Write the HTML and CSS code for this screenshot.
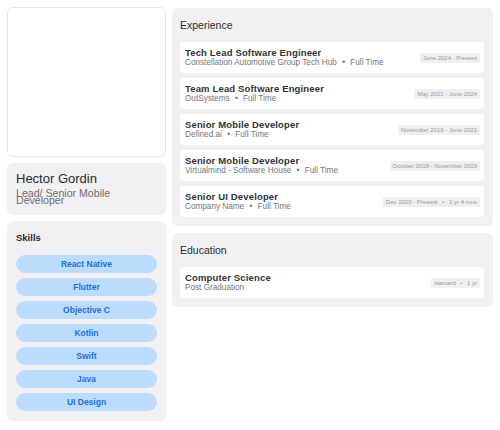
FILE: index.html
```html
<!DOCTYPE html>
<html lang="en">
<head>
    <meta charset="UTF-8">
    <meta name="viewport" content="width=device-width, initial-scale=1.0">
    <title>Hector Gordin - Resume</title>
    <link rel="stylesheet" href="styles.css">
</head>
<body>
    <div class="layout">
        <aside class="sidebar">
            <div class="photo"></div>

            <div class="panel profile">
                <h1>Hector Gordin</h1>
                <p>Lead/ Senior Mobile Developer</p>
            </div>

            <div class="panel skills">
                <h3>Skills</h3>
                <ul class="skill-list">
                    <li>React Native</li>
                    <li>Flutter</li>
                    <li>Objective C</li>
                    <li>Kotlin</li>
                    <li>Swift</li>
                    <li>Java</li>
                    <li>UI Design</li>
                </ul>
            </div>
        </aside>

        <main class="main">
            <section class="panel section">
                <h2>Experience</h2>
                <div class="entry">
                    <div class="entry-info">
                        <strong>Tech Lead Software Engineer</strong>
                        <span>Constellation Automotive Group Tech Hub <i>•</i> Full Time</span>
                    </div>
                    <div class="badge">June 2024 - Present</div>
                </div>
                <div class="entry">
                    <div class="entry-info">
                        <strong>Team Lead Software Engineer</strong>
                        <span>OutSystems <i>•</i> Full Time</span>
                    </div>
                    <div class="badge">May 2021 - June 2024</div>
                </div>
                <div class="entry">
                    <div class="entry-info">
                        <strong>Senior Mobile Developer</strong>
                        <span>Defined.ai <i>•</i> Full Time</span>
                    </div>
                    <div class="badge">November 2019 - June 2021</div>
                </div>
                <div class="entry">
                    <div class="entry-info">
                        <strong>Senior Mobile Developer</strong>
                        <span>Virtualmind - Software House <i>•</i> Full Time</span>
                    </div>
                    <div class="badge">October 2018 - November 2019</div>
                </div>
                <div class="entry">
                    <div class="entry-info">
                        <strong>Senior UI Developer</strong>
                        <span>Company Name <i>•</i> Full Time</span>
                    </div>
                    <div class="badge">Dec 2020 - Present <i>•</i> 1 yr 4 mos</div>
                </div>
            </section>

            <section class="panel section">
                <h2>Education</h2>
                <div class="entry">
                    <div class="entry-info">
                        <strong>Computer Science</strong>
                        <span>Post Graduation</span>
                    </div>
                    <div class="badge">Harvard <i>•</i> 1 yr</div>
                </div>
            </section>
        </main>
    </div>
</body>
</html>
```

FILE: styles.css
```css
* {
    margin: 0;
    padding: 0;
    box-sizing: border-box;
    font-family: 'Liberation Sans', Arial, sans-serif;
}

body {
    background: #ffffff;
    color: #2b2b2e;
    padding: 7px;
}

.layout {
    display: flex;
    gap: 6px;
    align-items: flex-start;
}

.sidebar {
    width: 159px;
    display: flex;
    flex-direction: column;
    gap: 6px;
}

.photo {
    height: 150px;
    background: #fff;
    border: 1px solid #e8e6e9;
    border-radius: 6px;
}

.panel {
    background: #f2f0f3;
    border-radius: 6px;
}

.profile {
    height: 52px;
    padding: 8px 9px;
}

.profile h1 {
    font-size: 13px;
    font-weight: normal;
    line-height: 15px;
    color: #2b2b2e;
}

.profile p {
    font-size: 10.6px;
    line-height: 7px;
    margin-top: 4px;
    color: #6f6d72;
}

.skills {
    padding: 11px 9px 10px;
}

.skills h3 {
    font-size: 9.5px;
    font-weight: bold;
    line-height: 12px;
    margin-bottom: 11px;
}

.skill-list {
    list-style: none;
    display: flex;
    flex-direction: column;
    gap: 5px;
}

.skill-list li {
    height: 18px;
    border-radius: 9px;
    background: #bcdcfd;
    color: #1f6fe0;
    font-size: 8.5px;
    font-weight: bold;
    display: flex;
    align-items: center;
    justify-content: center;
}

.main {
    flex: 1;
    display: flex;
    flex-direction: column;
    gap: 7px;
    margin-top: 1px;
}

.section {
    padding: 10px 9px 9px 8px;
    display: flex;
    flex-direction: column;
    gap: 5px;
}

.section h2 {
    font-size: 10.5px;
    font-weight: normal;
    line-height: 14px;
    margin-bottom: 5px;
}

.entry {
    height: 31px;
    background: #fff;
    border-radius: 4px;
    padding: 0 4px 0 5px;
    display: flex;
    align-items: center;
    justify-content: space-between;
}

.entry-info {
    display: flex;
    flex-direction: column;
}

.entry-info strong {
    font-size: 9.5px;
    font-weight: bold;
    letter-spacing: 0.15px;
    line-height: 11px;
    color: #333236;
}

.entry-info span {
    font-size: 8.2px;
    line-height: 10px;
    color: #76747a;
}

.entry-info i,
.badge i {
    font-style: normal;
    margin: 0 3px;
}

.badge {
    background: #f0eef1;
    color: #9a989e;
    font-size: 6px;
    padding: 2px 3px;
    border-radius: 1px;
}
```
